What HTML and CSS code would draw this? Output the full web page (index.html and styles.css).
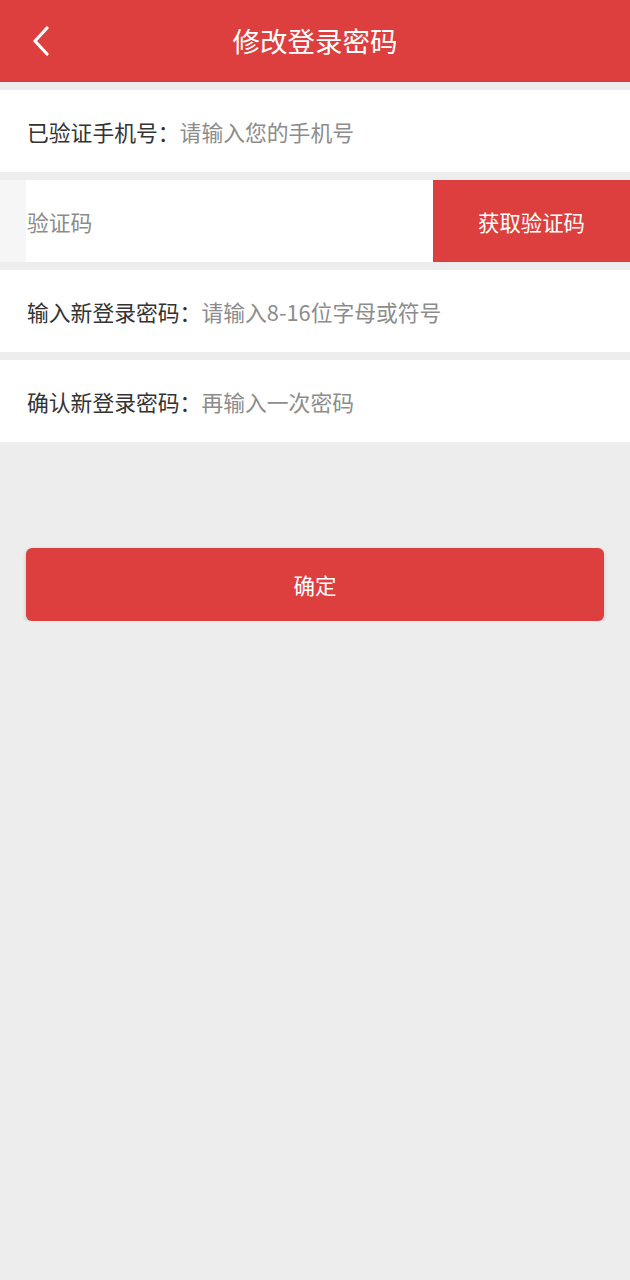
FILE: index.html
```html
<!DOCTYPE html>
<html lang="zh-CN">
<head>
<meta charset="utf-8">
<title>修改登录密码</title>
<link rel="stylesheet" href="styles.css">
</head>
<body>
<header class="topbar">
  <button class="back" aria-label="返回">
    <svg width="18" height="30" viewBox="0 0 18 30"><path d="M15 2 L3 15 L15 28" fill="none" stroke="#fff" stroke-width="3.2" stroke-linecap="round" stroke-linejoin="round"/></svg>
  </button>
  <h1 class="title">修改登录密码</h1>
</header>
<main class="form">
  <div class="row">
    <label class="label">已验证手机号：</label>
    <input class="field" type="text" placeholder="请输入您的手机号">
  </div>
  <div class="row row-code">
    <div class="code-strip"></div>
    <input class="field code-field" type="text" placeholder="验证码">
    <button class="code-btn">获取验证码</button>
  </div>
  <div class="row">
    <label class="label">输入新登录密码：</label>
    <input class="field" type="password" placeholder="请输入8-16位字母或符号">
  </div>
  <div class="row">
    <label class="label">确认新登录密码：</label>
    <input class="field" type="password" placeholder="再输入一次密码">
  </div>
  <div class="actions">
    <button class="submit">确定</button>
  </div>
</main>
</body>
</html>
```

FILE: styles.css
```css
* { box-sizing: border-box; }
html, body {
  margin: 0;
  padding: 0;
  background: #ededed;
  font-family: "Noto Sans CJK SC", "Noto Sans", sans-serif;
}
.topbar {
  height: 82px;
  background: #dc3f3e;
  display: flex;
  align-items: center;
  justify-content: center;
  position: relative;
}
.back {
  position: absolute;
  left: 32px;
  top: 26px;
  padding: 0;
  border: 0;
  background: none;
  display: flex;
  width: 18px;
  height: 30px;
}
.title {
  margin: 0;
  color: #fff;
  font-size: 27.5px;
  font-weight: normal;
  line-height: 1;
}
.form {
  display: flex;
  flex-direction: column;
  padding-top: 8px;
  gap: 8px;
}
.row {
  height: 82px;
  background: #fff;
  display: flex;
  align-items: center;
  padding-left: 27px;
  font-size: 21.8px;
}
.label {
  color: #333;
  white-space: nowrap;
}
.field {
  flex: 1;
  min-width: 0;
  border: 0;
  outline: none;
  padding: 0;
  font: inherit;
  color: #333;
  background: transparent;
}
.field::placeholder { color: #8c8c8c; }
.row-code {
  padding-left: 0;
  align-items: stretch;
}
.code-strip {
  width: 26px;
  background: #f6f6f6;
}
.code-field {
  padding-left: 1px;
}
.code-btn {
  width: 197px;
  border: 0;
  background: #dc3f3e;
  color: #fff;
  font: inherit;
  font-size: 21.4px;
  padding: 0;
}
.actions {
  padding: 98px 26px 0;
}
.submit {
  width: 100%;
  height: 73px;
  border: 0;
  border-radius: 6px;
  background: #dc3f3e;
  color: #fff;
  font: inherit;
  font-size: 21.5px;
  box-shadow: 0 2px 4px rgba(0,0,0,0.18);
}
```
